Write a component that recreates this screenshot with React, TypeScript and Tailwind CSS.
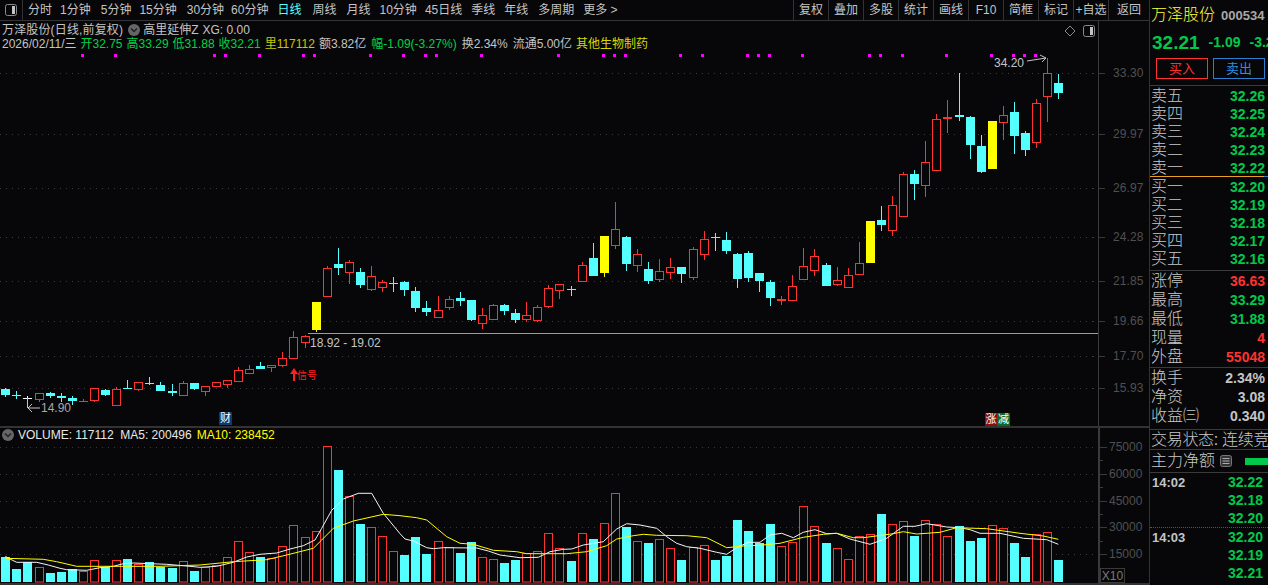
const CJK = "font-['Liberation_Sans','Noto_Sans_CJK_SC',sans-serif]";

type Candle = [string, number, number, number, number];
const candles: Candle[] = [
  ['c',388,389,395,397],['c',391,395,395,399],['w',396,398,398,403],['r',393,393,399,402],['c',392,393,396,398],
  ['c',393,396,398,402],['c',396,398,401,405],['r',399,401,401,402],['r',388,388,400,402],['c',389,390,395,396],
  ['r',387,389,405,406],['c',380,388,388,389],['r',382,382,389,391],['c',377,383,383,385],['c',382,385,391,391],
  ['c',384,391,393,396],['r',381,383,395,395],['c',383,383,389,390],['r',386,386,391,396],['r',382,382,386,387],
  ['r',380,380,384,388],['r',367,370,381,382],['r',365,369,373,373],['c',362,366,369,369],['r',365,365,367,372],
  ['r',352,358,365,367],['r',331,337,358,359],['r',335,336,342,348],['y',302,302,330,332],['r',266,268,296,297],
  ['c',248,264,268,275],['r',260,262,272,284],['c',268,272,285,288],['r',266,276,289,291],['r',280,282,287,292],
  ['c',277,283,283,292],['c',281,282,290,296],['c',287,291,308,312],['c',301,308,312,316],['r',296,310,317,317],
  ['r',296,299,307,310],['c',292,298,301,306],['c',300,300,320,321],['r',308,315,323,329],['r',304,305,319,319],
  ['c',304,305,311,315],['c',309,313,320,323],['r',302,315,319,322],['r',305,307,320,322],['r',285,288,306,308],
  ['r',284,284,290,299],['c',286,289,289,296],['r',262,265,281,282],['c',243,258,276,276],['y',236,236,273,277],
  ['r',202,229,245,249],['c',236,237,264,271],['r',249,254,265,272],['c',262,269,281,284],['r',259,271,279,282],
  ['r',258,267,272,279],['c',267,267,274,283],['r',247,249,277,280],['r',231,239,254,260],['c',233,237,237,251],
  ['c',232,240,251,254],['c',253,254,279,288],['c',251,253,278,282],['c',273,273,281,292],['c',280,282,298,306],
  ['R',296,299,299,305],['r',275,286,300,300],['r',248,266,279,279],['r',249,256,270,276],['c',263,265,286,286],
  ['r',267,280,284,286],['r',268,275,287,287],['r',242,263,274,275],['y',221,221,263,263],['c',206,220,225,231],
  ['r',196,205,230,236],['r',172,174,216,217],['c',170,174,184,200],['r',141,162,185,197],['r',114,119,170,170],
  ['R',100,117,117,133],['c',73,115,117,121],['c',116,117,145,159],['c',135,146,172,173],['y',121,121,169,169],
  ['r',106,115,122,140],['c',102,112,136,154],['c',131,133,150,156],['r',99,103,142,148],['r',58,73,96,122],
  ['c',74,83,93,99],
];

const volumes: [string, number][] = [
  ['c',557],['c',569],['c',562],['r',567],['c',573],['c',572],['c',569],['r',571],['r',560],['c',567],
  ['r',560],['c',559],['r',564],['c',562],['c',567],['c',568],['r',561],['c',571],['r',567],['r',565],
  ['r',557],['r',541],['r',552],['c',557],['r',558],['r',546],['r',525],['r',537],['r',531],['r',446],
  ['c',470],['r',496],['c',524],['r',527],['r',536],['r',551],['c',555],['c',537],['c',554],['r',541],
  ['r',547],['c',553],['c',542],['r',557],['r',559],['c',563],['c',560],['r',553],['r',551],['r',533],
  ['r',548],['c',561],['r',533],['c',539],['r',523],['r',493],['c',527],['r',541],['c',543],['r',539],
  ['r',548],['c',560],['r',547],['r',545],['c',560],['c',556],['c',520],['c',531],['c',543],['c',524],
  ['r',546],['r',542],['r',506],['r',526],['c',543],['r',548],['r',559],['r',536],['r',534],['c',514],
  ['r',524],['r',521],['c',536],['r',520],['r',524],['r',536],['c',526],['c',541],['c',538],['r',525],
  ['r',528],['c',543],['c',557],['r',534],['r',532],['c',560],
];

const ma5z: [number, number[][]][] = [
  [0, [[16,394],[30,402],[50,412],[110,412],[145,420],[180,430],[200,434],[260,436],[300,428],[340,424],[370,416],[400,414],[500,418],[570,424],[600,427],[650,424],[700,412],[740,396],[780,388],[830,384],[870,372],[910,362],[945,345],[965,310],[995,256],[1030,222],[1075,205],[1115,205],[1150,265],[1200,326]]],
  [400, [[15,342],[40,348],[80,368],[100,371],[130,368],[230,369],[265,378],[300,390],[360,398],[415,397],[450,380],[490,373],[515,372],[550,360],[610,350],[650,312],[680,296],[720,300],[770,310],[800,335],[830,355],[860,365],[900,370],[950,382],[980,388],[1010,368],[1045,352],[1080,352]]],
  [760, [[30,330],[65,325],[100,338],[130,322],[165,314],[200,326],[230,325],[270,342],[330,358],[380,340],[430,304],[465,304],[500,296],[560,306],[600,308],[630,314],[660,325],[720,325],[790,340],[860,344],[895,358]]],
];
const ma10z: [number, number[][]][] = [
  [0, [[16,400],[130,403],[170,410],[230,424],[300,424],[480,424],[600,420],[700,410],[800,404],[860,390],[940,370],[965,345],[1000,310],[1060,288],[1150,268],[1200,272]]],
  [400, [[50,278],[80,285],[140,335],[180,355],[220,358],[280,376],[350,380],[380,386],[500,386],[560,380],[620,362],[650,342],[700,332],[730,328],[770,331],[860,332],[920,338],[980,368],[1040,362],[1080,361]]],
  [760, [[60,355],[130,337],[190,328],[230,325],[280,338],[310,338],[400,326],[430,320],[470,327],[540,322],[590,308],[680,311],[780,325],[850,333],[895,343]]],
];
const toPts = (z: [number, number[][]][]) =>
  z.flatMap(([ox, ps]) => ps.map(([x, y]) => `${(ox + x / 3).toFixed(1)},${(425 + y / 3).toFixed(1)}`)).join(' ');

const magenta = [81,114,213,224,258,302,313,369,402,424,435,480,557,602,613,624,679,701,746,757,768,801,868,879,901,945,990,1012,1023,1034];
const priceAxis: [number, string][] = [[73,'33.30'],[134,'29.97'],[188,'26.97'],[237,'24.28'],[281,'21.85'],[321,'19.66'],[356,'17.70'],[388,'15.93']];
const volAxis: [number, string][] = [[447,'75000'],[474,'60000'],[501,'45000'],[527,'30000'],[554,'15000']];

const RED = '#ff3232';
const CYAN = '#54ffff';
const YEL = '#ffff00';
const BG = '#070709';
const cx = (i: number) => Math.round(5.3 + 11.084 * i);

function CandleShape({ c, i }: { c: Candle; i: number }) {
  const [t, hi, top, bot, lo] = c;
  const x = cx(i);
  const col = t === 'r' || t === 'R' ? RED : t === 'c' ? CYAN : t === 'y' ? YEL : '#ffffff';
  const wick = <rect x={x} y={hi} width={1} height={Math.max(lo - hi, 1)} fill={col} />;
  if (top === bot) return <g>{wick}<rect x={x - 4} y={top} width={9} height={t === 'R' ? 2 : 1} fill={col} /></g>;
  if (t === 'r' || t === 'R')
    return <g>{wick}<rect x={x - 3.5} y={top + 0.5} width={8} height={bot - top} fill={BG} stroke={col} strokeWidth={1} /></g>;
  return <g>{wick}<rect x={x - 4} y={top} width={9} height={bot - top} fill={col} /></g>;
}

function ChevronDot() {
  return (
    <svg width="12" height="12" viewBox="0 0 12 12" className="shrink-0">
      <circle cx="6" cy="6" r="6" fill="#666" />
      <path d="M3 4.5 L6 7.5 L9 4.5" fill="none" stroke="#222" strokeWidth="1.5" />
    </svg>
  );
}

function PanelIcon() {
  return (
    <svg width="12" height="12" viewBox="0 0 12 12" className="shrink-0">
      <rect x="0.5" y="0.5" width="11" height="11" rx="2" fill="none" stroke="#8a8a8a" />
      <rect x="7" y="2" width="3" height="8" fill="#c4c4c4" />
    </svg>
  );
}

function Tab({ t, active, className }: { t: string; active?: boolean; className?: string }) {
  return <span className={`${active ? 'text-[#54ffff]' : 'text-[#c4c4c4]'} ${className ?? ''}`}>{t}</span>;
}

function Row({ l, v, c, h }: { l: string; v: string; c: string; h: string }) {
  return (
    <div className={`flex items-center justify-between pl-[1px] pr-[3px] ${h}`}>
      <span className="text-[16px] leading-none text-[#c8c8c8] font-light">{l}</span>
      <span className={`text-[14px] leading-none font-bold ${c}`}>{v}</span>
    </div>
  );
}

const G = 'text-[#00c84a]';
const R = 'text-[#ff3232]';
const W = 'text-[#c4c4c4]';

export default function App() {
  return (
    <div className={`flex h-[585px] w-[1268px] overflow-hidden bg-[#070709] ${CJK}`}>
      {/* left column */}
      <div className="flex w-[1149px] shrink-0 flex-col">
        {/* toolbar */}
        <div className="flex h-[21px] shrink-0 items-center border-b border-[#333] text-[12px] leading-none">
          <div className="ml-[5px] flex h-full w-[18px] items-center border-r border-[#333]"><PanelIcon /></div>
          <div className="ml-[5px] flex items-center gap-[9px]">
            <Tab t="分时" />
            <Tab t="1分钟" className="ml-[-1px]" />
            <Tab t="5分钟" className="ml-[1px]" />
            <Tab t="15分钟" className="ml-[-1px]" />
            <Tab t="30分钟" className="ml-[1px]" />
            <Tab t="60分钟" className="ml-[-2px]" />
            <Tab t="日线" active />
            <Tab t="周线" className="ml-[2px]" />
            <Tab t="月线" className="ml-[1px]" />
            <Tab t="10分钟" />
            <Tab t="45日线" className="ml-[-1px]" />
            <Tab t="季线" />
            <Tab t="年线" />
            <Tab t="多周期" className="ml-[1px]" />
            <Tab t="更多 >" />
          </div>
          <div className="ml-auto flex h-full text-[#c4c4c4]">
            {['复权','叠加','多股','统计','画线','F10','简框','标记','+自选'].map((t) => (
              <div key={t} className="flex h-full w-[35px] items-center justify-center border-l border-[#333]">{t}</div>
            ))}
            <div className="flex h-full w-[41px] items-center justify-center border-l border-[#333]">返回</div>
          </div>
        </div>

        {/* price chart */}
        <div className="relative h-[405px] shrink-0">
          <svg width="1149" height="405" viewBox="0 21 1149 405" className="absolute inset-0">
            {priceAxis.map(([y]) => (
              <line key={y} x1="0" x2="1098" y1={y + 0.5} y2={y + 0.5} stroke="#3a3a3a" strokeDasharray="1 5" />
            ))}
            <rect x="1098" y="21" width="1" height="405" fill="#3a3a3a" />
            {priceAxis.map(([y]) => (
              <g key={y}>
                <rect x="1099" y={y} width="6" height="1" fill="#3a3a3a" />
                <rect x="1093" y={y} width="1" height="1" fill="#3a3a3a" />
              </g>
            ))}
            <rect x="308" y="333" width="790" height="1" fill="#9a9a9a" />
            {magenta.map((x) => <rect key={x} x={x} y="54" width="3" height="3" fill="#ff00ff" />)}
            {candles.map((c, i) => <CandleShape key={i} c={c} i={i} />)}
            <path d="M1027 61 L1046 58 M1040 55 L1046 58 L1042 62" fill="none" stroke="#c4c4c4" />
            <path d="M40 408 L28 408 M32 404 L28 408 L32 412 M27.5 398 L27.5 408" fill="none" stroke="#c4c4c4" />
            <path d="M294 368 L290 374 L293 374 L293 381 L295 381 L295 374 L298 374 Z" fill="#ff2020" />
            <path d="M1070 26 L1075 31 L1070 36 L1065 31 Z" fill="none" stroke="#8a8a8a" />
          </svg>

          <div className="absolute left-[1083px] top-[4px]"><PanelIcon /></div>

          {/* legends */}
          <div className="absolute left-[2px] top-[2px] flex h-[14px] items-center text-[12px] leading-none text-[#c4c4c4]">
            <span className="tracking-[0.15px]">万泽股份(日线,前复权)</span>
            <span className="ml-[5px]"><ChevronDot /></span>
            <span className="ml-[3px]">高里延伸Z</span>
            <span className="ml-[4px]">XG: 0.00</span>
          </div>
          <div className="absolute left-[2px] top-[16px] flex h-[14px] items-center gap-[4px] whitespace-nowrap text-[12px] leading-none">
            <span className="text-[#c4c4c4]">2026/02/11/三</span>
            <span className="text-[#00d24a]">开32.75</span>
            <span className="text-[#00d24a]">高33.29</span>
            <span className="text-[#00d24a]">低31.88</span>
            <span className="text-[#00d24a]">收32.21</span>
            <span className="text-[#c8c800]">里117112</span>
            <span className="text-[#c4c4c4]">额3.82亿</span>
            <span className="ml-px text-[#00d24a]">幅-1.09(-3.27%)</span>
            <span className="ml-px text-[#c4c4c4]">换2.34%</span>
            <span className="ml-px text-[#c4c4c4]">流通5.00亿</span>
            <span className="text-[#d8d800]">其他生物制药</span>
          </div>

          {priceAxis.map(([y, t]) => (
            <span key={t} className="absolute left-[1113px] text-[12px] leading-[14px] tracking-[0.1px] text-[#505050]" style={{ top: y - 21 - 7 }}>{t}</span>
          ))}

          <span className="absolute left-[994px] top-[35px] text-[12px] leading-[14px] text-[#c4c4c4]">34.20</span>
          <span className="absolute left-[310px] top-[315px] text-[12px] leading-[14px] text-[#c4c4c4]">18.92 - 19.02</span>
          <span className="absolute left-[41px] top-[380px] text-[12px] leading-[14px] text-[#a8a8a8]">14.90</span>
          <span className="absolute left-[297px] top-[348px] text-[10px] leading-[14px] text-[#ff2020]">信号</span>
          <span className="absolute left-[219px] top-[391px] flex h-[13px] w-[13px] items-center justify-center bg-[#0f3a6e] text-[11px] leading-none text-white">财</span>
          <span className="absolute left-[985px] top-[392px] flex h-[13px] w-[12px] items-center justify-center bg-[#8a1010] text-[11px] leading-none text-white">涨</span>
          <span className="absolute left-[997px] top-[392px] flex h-[13px] w-[13px] items-center justify-center bg-[#0a6a2a] text-[11px] leading-none text-white">减</span>
        </div>

        {/* volume chart */}
        <div className="relative flex-1 border-y-2 border-[#333]">
          <svg width="1149" height="155" viewBox="0 428 1149 155" className="absolute inset-0">
            {volAxis.map(([y]) => (
              <line key={y} x1="0" x2="1098" y1={y + 0.5} y2={y + 0.5} stroke="#3a3a3a" strokeDasharray="1 5" />
            ))}
            <rect x="1098" y="428" width="2" height="155" fill="#3a3a3a" />
            {volAxis.map(([y]) => <rect key={y} x="1100" y={y} width="7" height="1" fill="#3a3a3a" />)}
            {[460, 487, 514, 541].map((y) => <rect key={y} x="1100" y={y} width="3" height="1" fill="#3a3a3a" />)}
            {volumes.map(([t, y], i) =>
              t === 'r' ? (
                <rect key={i} x={cx(i) - 3.5} y={y + 0.5} width={8} height={581.5 - y} fill={BG} stroke={RED} />
              ) : (
                <rect key={i} x={cx(i) - 4} y={y} width={9} height={582 - y} fill={CYAN} />
              ),
            )}
            <polyline points={toPts(ma5z)} fill="none" stroke="#f4f4f4" strokeWidth="1" />
            <polyline points={toPts(ma10z)} fill="none" stroke={YEL} strokeWidth="1" />
          </svg>
          <div className="absolute left-[2px] top-0 flex h-[14px] items-center gap-[5px] whitespace-nowrap text-[12px] leading-none">
            <ChevronDot />
            <span className="ml-[-1px] text-[#e8e8e8]">VOLUME: 117112&nbsp;&nbsp;MA5: 200496</span>
            <span className="text-[#ffff00]">MA10: 238452</span>
          </div>
          {volAxis.map(([y, t]) => (
            <span key={t} className="absolute left-[1109px] text-[12px] leading-[14px] text-[#505050]" style={{ top: y - 428 - 7 }}>{t}</span>
          ))}
          <span className="absolute bottom-0 left-[1100px] flex h-[15px] w-[25px] items-center justify-center border border-[#3a3a3a] text-[12px] leading-none text-[#7a7a7a]">X10</span>
        </div>
      </div>

      {/* right column */}
      <div className="flex w-[119px] shrink-0 flex-col overflow-hidden border-l border-[#333]">
        <div className="flex h-[30px] items-center whitespace-nowrap pl-[1px]">
          <span className="text-[16px] leading-none text-[#ffff40] font-light">万泽股份</span>
          <span className="ml-[6px] text-[13px] font-bold leading-none text-[#a8a8a8]">000534</span>
        </div>
        <div className="flex h-[24px] items-center whitespace-nowrap pl-[2px] font-bold text-[#00c84a]">
          <span className="text-[19px] leading-none">32.21</span>
          <span className="ml-[9px] text-[14px] leading-none">-1.09</span>
          <span className="ml-[9px] text-[14px] leading-none">-3.27</span>
        </div>
        <div className="mt-[4px] flex h-[21px] gap-[5px] pl-[6px] text-[13px] leading-none">
          <div className="flex w-[52px] items-center justify-center border border-[#ff3232] text-[#ff3232]">买入</div>
          <div className="flex w-[52px] items-center justify-center border border-[#2c7fd0] text-[#2c8fe0]">卖出</div>
        </div>
        <div className="mt-[6px] h-px bg-[#3a3a3a]" />
        <Row l="卖五" v="32.26" c={G} h="h-[18px] pt-[2px]" />
        <Row l="卖四" v="32.25" c={G} h="h-[18px] pt-[2px]" />
        <Row l="卖三" v="32.24" c={G} h="h-[18px] pt-[2px]" />
        <Row l="卖二" v="32.23" c={G} h="h-[18px] pt-[2px]" />
        <Row l="卖一" v="32.22" c={G} h="h-[18px] pt-[2px]" />
        <div className="flex h-px"><div className="w-[114px] bg-[#e8a020]" /><div className="flex-1 bg-[#2c7fd0]" /></div>
        <Row l="买一" v="32.20" c={G} h="h-[18px] pt-[2px]" />
        <Row l="买二" v="32.19" c={G} h="h-[18px] pt-[2px]" />
        <Row l="买三" v="32.18" c={G} h="h-[18px] pt-[2px]" />
        <Row l="买四" v="32.17" c={G} h="h-[18px] pt-[2px]" />
        <Row l="买五" v="32.16" c={G} h="h-[18px] pt-[2px]" />
        <div className="mt-[3px] h-px bg-[#3a3a3a]" />
        <Row l="涨停" v="36.63" c={R} h="h-[19px]" />
        <Row l="最高" v="33.29" c={G} h="h-[19px]" />
        <Row l="最低" v="31.88" c={G} h="h-[19px]" />
        <Row l="现量" v="4" c={R} h="h-[19px]" />
        <Row l="外盘" v="55048" c={R} h="h-[19px]" />
        <div className="mt-[1px] h-px bg-[#3a3a3a]" />
        <Row l="换手" v="2.34%" c={W} h="h-[19px]" />
        <Row l="净资" v="3.08" c={W} h="h-[19px]" />
        <Row l="收益㈢" v="0.340" c={W} h="h-[19px]" />
        <div className="mt-[4px] h-px bg-[#3a3a3a]" />
        <div className="flex h-[19px] items-center whitespace-nowrap pl-px text-[16px] leading-none tracking-[-0.3px] text-[#c8c8c8] font-light">交易状态: 连续竞</div>
        <div className="h-px bg-[#3a3a3a]" />
        <div className="flex h-[22px] items-center whitespace-nowrap pl-[1px]">
          <span className="text-[16px] leading-none text-[#c8c8c8] font-light">主力净额</span>
          <svg width="12" height="12" viewBox="0 0 12 12" className="ml-[5px] shrink-0">
            <rect x="0.5" y="0.5" width="11" height="11" rx="2" fill="#333" stroke="#777" />
            <path d="M2.5 3.5H9.5M2.5 6H9.5M2.5 8.5H9.5" stroke="#aaa" />
          </svg>
          <span className="ml-[13px] h-[7px] flex-1 bg-[#00c84a]" />
        </div>
        <div className="h-px bg-[#3a3a3a]" />
        {[
          ['14:02', '32.22'], ['', '32.18'], ['', '32.20'],
        ].map(([t, v]) => (
          <div key={v} className="flex h-[18px] items-center justify-between pl-[2px] pr-[5px] text-[14px] font-bold leading-none">
            <span className="text-[13px] text-[#c4c4c4]">{t}</span><span className={G}>{v}</span>
          </div>
        ))}
        <div className="h-0 border-t border-dotted border-[#555]" />
        {[
          ['14:03', '32.20'], ['', '32.19'], ['', '32.21'],
        ].map(([t, v]) => (
          <div key={v} className="flex h-[18px] items-center justify-between pl-[2px] pr-[5px] text-[14px] font-bold leading-none">
            <span className="text-[13px] text-[#c4c4c4]">{t}</span><span className={G}>{v}</span>
          </div>
        ))}
      </div>
    </div>
  );
}
